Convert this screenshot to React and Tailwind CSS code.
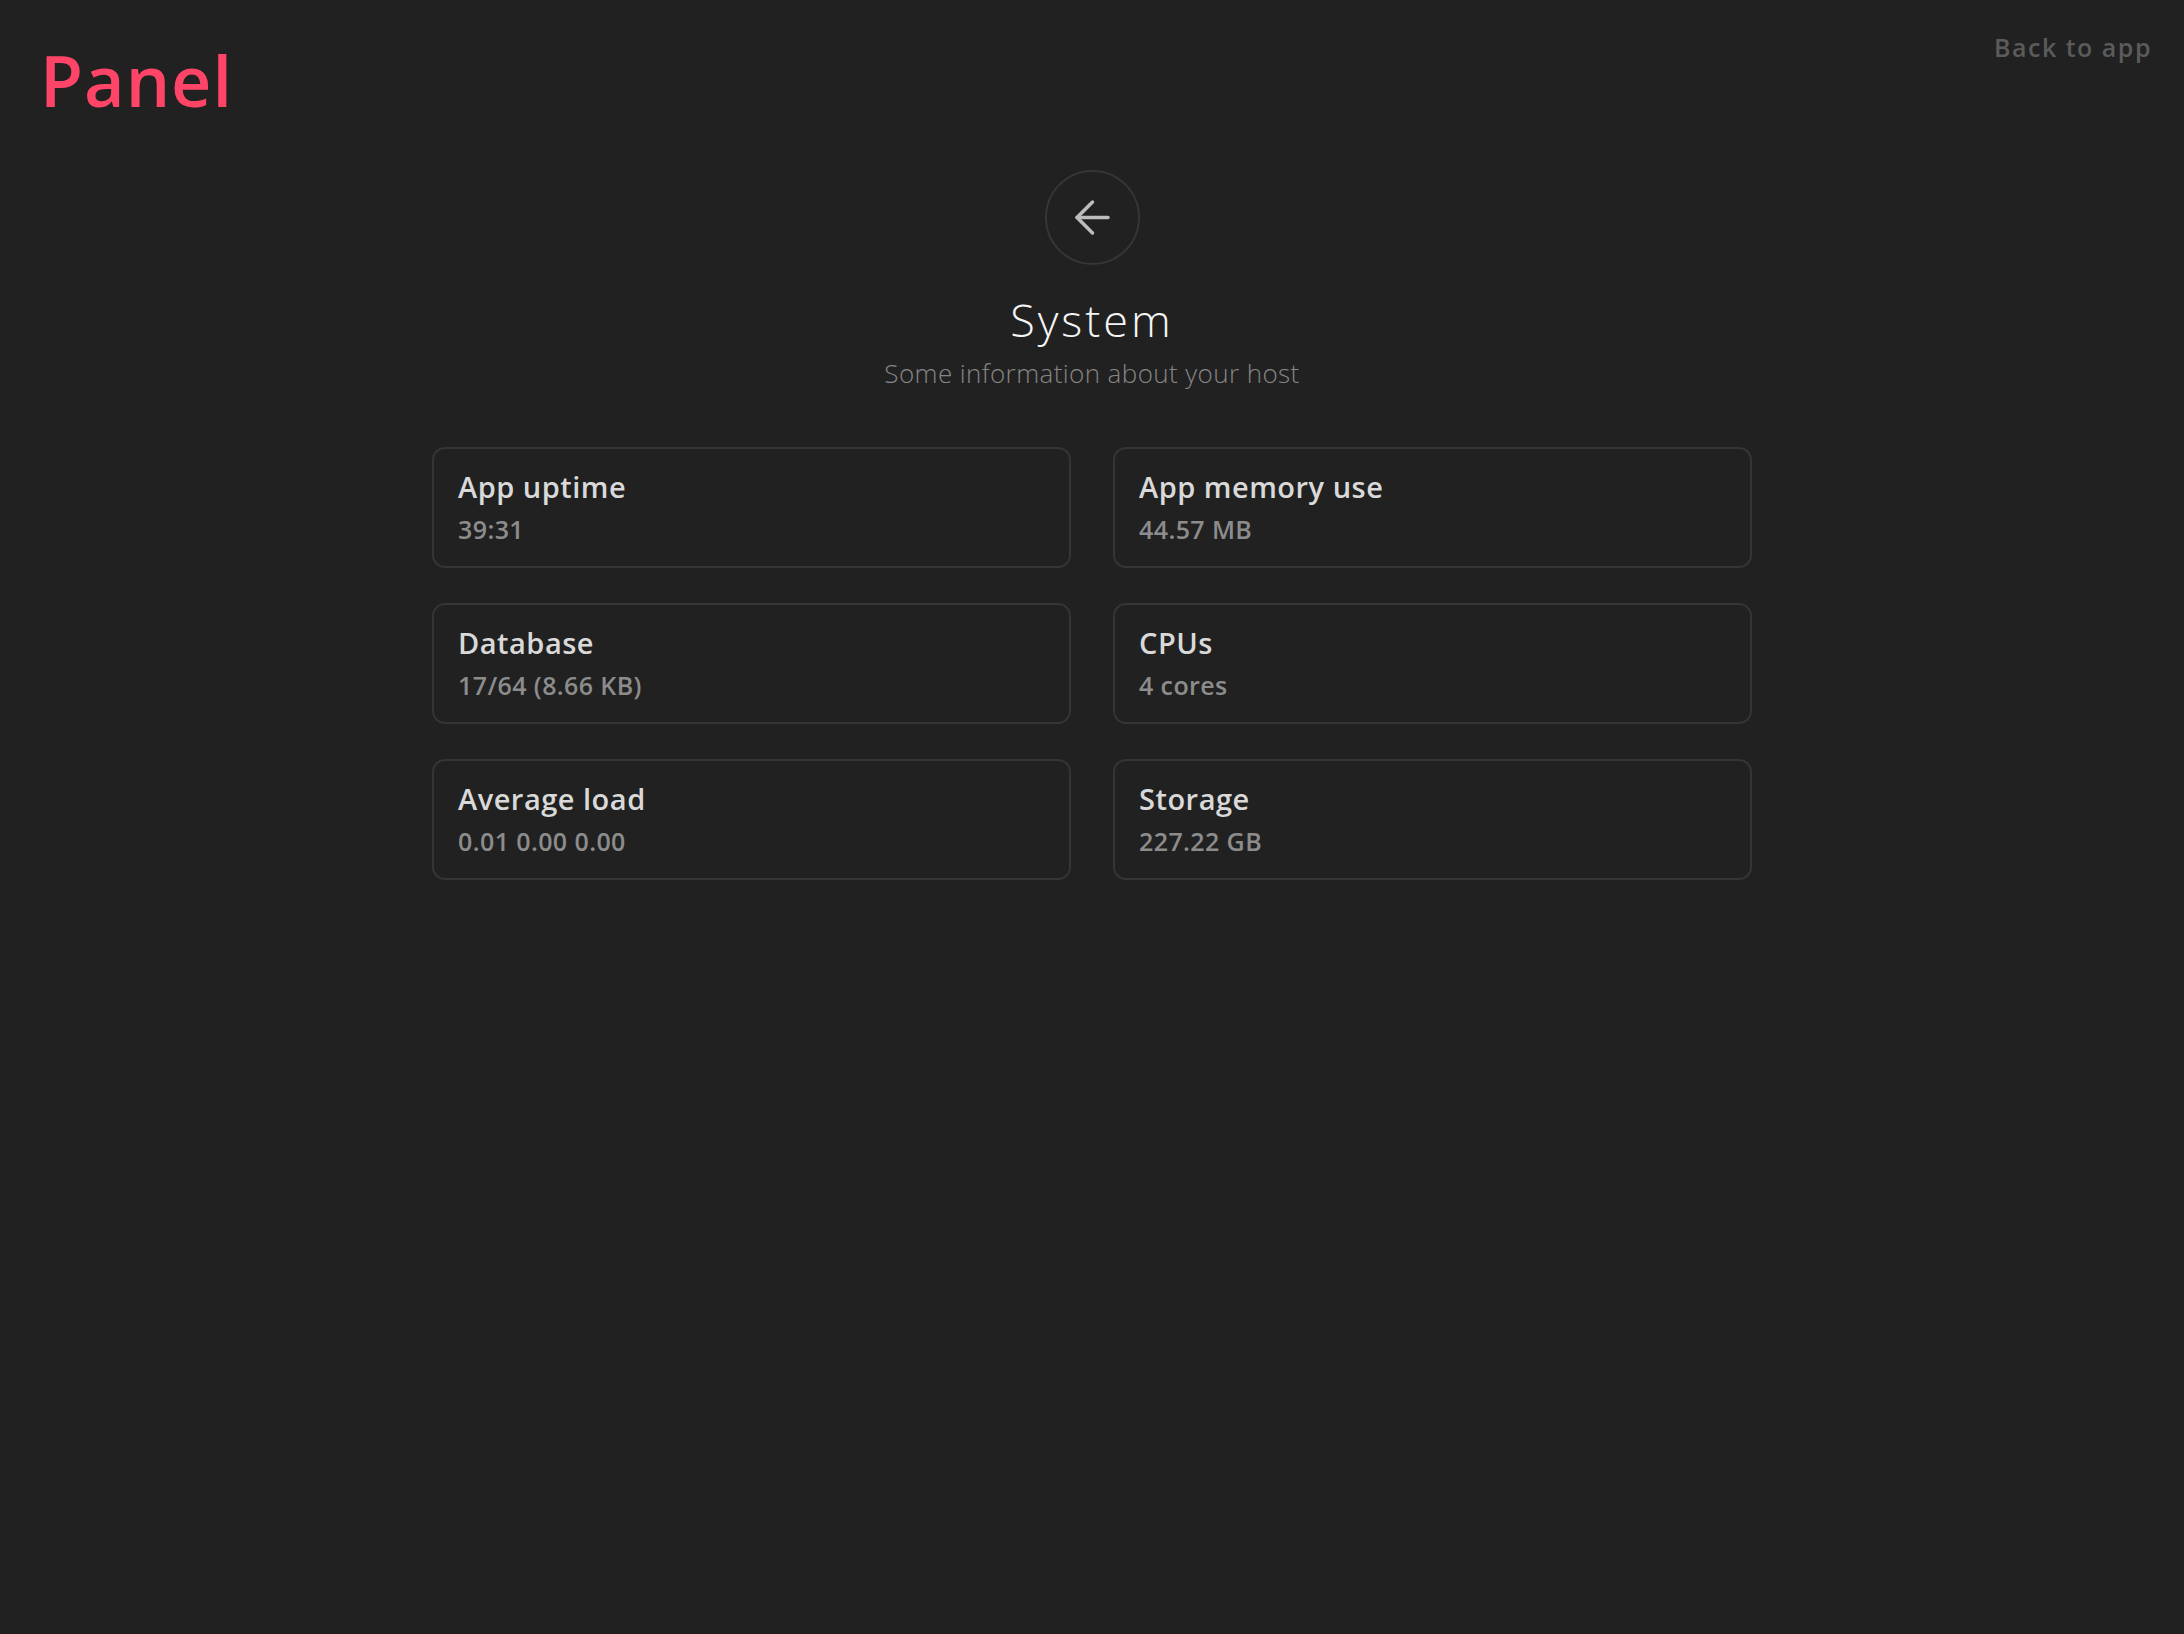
import React from 'react';
import { ArrowLeft } from 'lucide-react';

const stats = [
    { title: 'App uptime', value: '39:31' },
    { title: 'App memory use', value: '44.57 MB' },
    { title: 'Database', value: '17/64 (8.66 KB)' },
    { title: 'CPUs', value: '4 cores' },
    { title: 'Average load', value: '0.01 0.00 0.00' },
    { title: 'Storage', value: '227.22 GB' },
];

const StatCard = ({ title, value }) => (
    <div className="border-2 border-[#353535] rounded-[13px] pt-[18px] pb-[15px] pl-[24px] pr-6">
        <p className="text-[29px] leading-[40px] font-semibold tracking-[0.5px] text-[#d9d9d9]">{title}</p>
        <p className="text-[25px] leading-[44px] font-semibold tracking-[0.4px] text-[#8c8c8c]">{value}</p>
    </div>
);

const App = () => {
    return (
        <div className="min-h-screen bg-[#212121] font-['Open_Sans','Noto_Sans',sans-serif]">
            {/* Header */}
            <header className="flex items-start justify-between pt-[35px] pl-[40px] pr-[32px]">
                <h1 className="mt-[10px] text-[70px] leading-[70px] font-semibold tracking-[1px] text-[#ff4567]">Panel</h1>
                <a href="#" className="text-[25px] leading-[25px] font-semibold tracking-[1.5px] text-[#5b5b5b]">
                    Back to app
                </a>
            </header>

            {/* Content */}
            <main className="flex flex-col items-center pt-[55px] pb-20">
                <button className="w-[95px] h-[95px] rounded-full border-2 border-[#363636] flex items-center justify-center text-[#bdbdbd]">
                    <ArrowLeft size={53} strokeWidth={1.6} />
                </button>
                <h2 className="mt-[28px] text-[45px] leading-[54px] font-light tracking-[3px] text-[#f5f5f5]">System</h2>
                <p className="mt-[11px] text-[26px] leading-[31px] font-light tracking-[0.4px] text-[#868686]">
                    Some information about your host
                </p>

                <div className="mt-[58px] w-[1320px] grid grid-cols-2 gap-x-[42px] gap-y-[35px]">
                    {stats.map((s) => (
                        <StatCard key={s.title} title={s.title} value={s.value} />
                    ))}
                </div>
            </main>
        </div>
    );
};

export default App;
